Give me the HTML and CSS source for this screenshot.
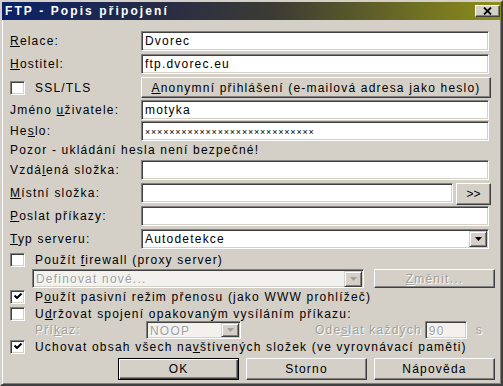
FILE: index.html
```html
<!DOCTYPE html>
<html lang="cs">
<head>
    <meta charset="UTF-8">
    <title>FTP - Popis připojení</title>
    <link rel="stylesheet" href="styles.css">
</head>
<body>
    <div class="dialog">
        <div class="titlebar">
            <span class="title">FTP - Popis připojení</span>
            <button class="close">
                <svg width="9" height="8" viewBox="0 0 9 8"><path d="M1 0.5 L8 7.5 M8 0.5 L1 7.5" stroke="#000" stroke-width="1.8"/></svg>
            </button>
        </div>

        <div class="form">
            <div class="row">
                <label class="lbl"><u>R</u>elace:</label>
                <div class="edit">Dvorec</div>
            </div>
            <div class="row">
                <label class="lbl"><u>H</u>ostitel:</label>
                <div class="edit">ftp.dvorec.eu</div>
            </div>
            <div class="row row-ssl">
                <label class="lbl check-lbl"><span class="box"></span><span>SSL/TLS</span></label>
                <button class="btn wide"><u>A</u>nonymní přihlášení (e-mailová adresa jako heslo)</button>
            </div>
            <div class="row row-tight">
                <label class="lbl">Jméno <u>u</u>živatele:</label>
                <div class="edit">motyka</div>
            </div>
            <div class="row row-flush">
                <label class="lbl">He<u>s</u>lo:</label>
                <div class="edit pass">××××××××××××××××××××××××××××</div>
            </div>
            <div class="note">Pozor - ukládání hesla není bezpečné!</div>
            <div class="row">
                <label class="lbl">Vzdá<u>l</u>ená složka:</label>
                <div class="edit"></div>
            </div>
            <div class="row">
                <label class="lbl"><u>M</u>ístní složka:</label>
                <div class="edit"></div>
                <button class="btn browse">&gt;&gt;</button>
            </div>
            <div class="row">
                <label class="lbl"><u>P</u>oslat příkazy:</label>
                <div class="edit"></div>
            </div>
            <div class="row">
                <label class="lbl"><u>T</u>yp serveru:</label>
                <div class="edit combo">Autodetekce
                    <span class="arrow"><svg width="7" height="4" viewBox="0 0 7 4"><path d="M0 0 H7 L3.5 4 Z" fill="#000"/></svg></span>
                </div>
            </div>

            <label class="check"><span class="box"></span><span>Použít <u>f</u>irewall (proxy server)</span></label>
            <div class="proxy">
                <div class="edit combo off">Definovat nové...
                    <span class="arrow"><svg width="7" height="4" viewBox="0 0 7 4"><path d="M0 0 H7 L3.5 4 Z" fill="#a0a0a0"/></svg></span>
                </div>
                <button class="btn change off"><u>Z</u>měnit...</button>
            </div>
            <label class="check"><span class="box on"></span><span>P<u>o</u>užít pasivní režim přenosu (jako WWW prohlížeč)</span></label>
            <label class="check check-keep"><span class="box"></span><span>U<u>d</u>ržovat spojení opakovaným vysíláním příkazu:</span></label>
            <div class="keepalive">
                <span class="off-text cmd-lbl">Pří<u>k</u>az:</span>
                <div class="edit combo off noop">NOOP
                    <span class="arrow"><svg width="7" height="4" viewBox="0 0 7 4"><path d="M0 0 H7 L3.5 4 Z" fill="#a0a0a0"/></svg></span>
                </div>
                <span class="off-text every">Ode<u>s</u>lat každých</span>
                <div class="edit off secs">90</div>
                <span class="off-text unit">s</span>
            </div>
            <label class="check check-cache"><span class="box on"></span><span>Uchovat obsah všech na<u>v</u>štívených složek (ve vyrovnávací paměti)</span></label>

            <div class="actions">
                <button class="btn action default">OK</button>
                <button class="btn action">Storno</button>
                <button class="btn action">Nápověda</button>
            </div>
        </div>
    </div>
</body>
</html>
```

FILE: styles.css
```css
body {
    margin: 0;
    padding: 0;
    background: #d4d0c8;
    font-family: "Liberation Sans", Arial, sans-serif;
    font-size: 12px;
    letter-spacing: 1.2px;
    color: #000;
}
.dialog {
    width: 503px;
    height: 386px;
    box-sizing: border-box;
    border: 2px solid;
    border-color: #d4d0c8 #404040 #404040 #d4d0c8;
    box-shadow: inset 1px 1px #fff, inset -1px -1px #808080;
    background: #d4d0c8;
    overflow: hidden;
}
.titlebar {
    height: 18px;
    display: flex;
    align-items: center;
    justify-content: space-between;
    padding: 0 1px 0 3px;
    background: linear-gradient(to right, #0a226a 0%, #262b46 30%, #3c3c34 55%, #8e8e1a 100%);
}
.title {
    color: #fff;
    font-weight: bold;
    letter-spacing: 2.1px;
}
.close {
    width: 25px;
    height: 12px;
    padding: 0;
    display: flex;
    align-items: center;
    justify-content: center;
    background: #d4d0c8;
    border: 1px solid;
    border-color: #fff #404040 #404040 #fff;
    box-shadow: inset -1px -1px #808080;
}
.form {
    padding: 11px 6px 0 8px;
    display: flex;
    flex-direction: column;
}
.row {
    display: flex;
    align-items: flex-start;
    height: 20px;
    margin-bottom: 3px;
    padding-right: 6px;
}
.row-ssl {
    height: 21px;
    margin-bottom: 2px;
}
.row-tight {
    margin-bottom: 1px;
}
.row-flush {
    margin-bottom: 0;
}
.lbl {
    width: 131px;
    flex: none;
    line-height: 20px;
}
.edit {
    flex: 1;
    height: 20px;
    box-sizing: border-box;
    background: #fff;
    border: 1px solid;
    border-color: #808080 #fff #fff #808080;
    box-shadow: inset 1px 1px #404040, inset -1px -1px #d4d0c8;
    padding: 0 3px;
    line-height: 18px;
    white-space: nowrap;
    overflow: hidden;
}
.pass {
    font-size: 9px;
    letter-spacing: 0.8px;
    padding-top: 1px;
}
.note {
    height: 19px;
    line-height: 18px;
}
.btn {
    font: inherit;
    letter-spacing: inherit;
    color: #000;
    background: #d4d0c8;
    border: 1px solid;
    border-color: #fff #404040 #404040 #fff;
    box-shadow: inset -1px -1px #808080;
    padding: 0;
    height: 21px;
}
.wide {
    flex: 1;
    margin-right: -2px;
}
.browse {
    width: 35px;
    height: 22px;
    margin-left: 3px;
    margin-right: -2px;
    letter-spacing: 0;
}
.check-lbl {
    display: flex;
    align-items: center;
    height: 16px;
    line-height: 16px;
    margin-top: 3px;
}
.box {
    width: 15px;
    height: 14px;
    flex: none;
    box-sizing: border-box;
    background: #fff;
    border: 1px solid;
    border-color: #808080 #fff #fff #808080;
    box-shadow: inset 1px 1px #404040, inset -1px -1px #d4d0c8;
    margin-right: 10px;
    position: relative;
}
.box.on::after {
    content: "";
    position: absolute;
    left: 3px;
    top: 2px;
    width: 8px;
    height: 6px;
    background: no-repeat center / 8px 6px url("data:image/svg+xml,%3Csvg xmlns='http://www.w3.org/2000/svg' width='8' height='6' viewBox='0 0 8 6'%3E%3Cpath d='M0.5 2.5 L3 5 L7.5 0.5' stroke='%23000' stroke-width='2' fill='none'/%3E%3C/svg%3E");
}
.check {
    display: flex;
    align-items: center;
    height: 16px;
    margin-bottom: 1px;
}
.check-keep {
    height: 15px;
    margin-bottom: 0;
}
.check-cache {
    margin-bottom: 3px;
}
.combo {
    position: relative;
    padding-right: 22px;
}
.arrow {
    position: absolute;
    right: 1px;
    top: 1px;
    width: 18px;
    height: 16px;
    box-sizing: border-box;
    display: flex;
    align-items: center;
    justify-content: center;
    background: #d4d0c8;
    border: 1px solid;
    border-color: #d4d0c8 #404040 #404040 #d4d0c8;
    box-shadow: inset 1px 1px #fff, inset -1px -1px #808080;
}
.off {
    color: #a0a0a0;
    text-shadow: 1px 1px #fff;
}
.edit.off {
    background: #f2f1ee;
}
.proxy {
    display: flex;
    height: 19px;
    margin-bottom: 1px;
    padding-left: 22px;
}
.proxy .edit {
    flex: none;
    width: 332px;
    height: 19px;
}
.change {
    width: 121px;
    height: 19px;
    margin-left: 10px;
}
.keepalive {
    display: flex;
    align-items: center;
    height: 18px;
}
.off-text {
    color: #a0a0a0;
    text-shadow: 1px 1px #fff;
}
.cmd-lbl {
    width: 111px;
    padding-left: 25px;
}
.noop {
    flex: none;
    width: 95px;
    height: 18px;
}
.noop .arrow {
    height: 14px;
}
.every {
    margin-left: auto;
    margin-right: 3px;
}
.secs {
    flex: none;
    width: 42px;
    height: 18px;
}
.unit {
    margin-left: 9px;
    margin-right: 12px;
}
.actions {
    display: flex;
    justify-content: flex-end;
    gap: 7px;
}
.action {
    width: 121px;
    height: 22px;
}
.default {
    border-color: #000;
    box-shadow: inset 1px 1px #fff, inset -1px -1px #404040, inset -2px -2px #808080;
}
```
